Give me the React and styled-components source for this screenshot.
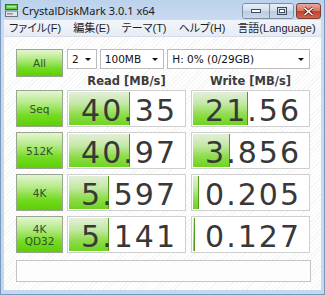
import styled, { createGlobalStyle } from 'styled-components'

const GlobalStyle = createGlobalStyle`
  html, body {
    margin: 0;
    padding: 0;
    background: #c6d8ee;
  }
  * {
    box-sizing: border-box;
  }
`

const Window = styled.div`
  width: 325px;
  height: 295px;
  display: flex;
  flex-direction: column;
  padding: 0 3px 4px 3px;
  background: linear-gradient(to bottom, #bcd2ec 0%, #c9dbf0 20px, #c3d7ee 100%);
  border: 1px solid #7a98bc;
  border-top: none;
`

const TitleBar = styled.div`
  height: 20px;
  flex: none;
  display: flex;
  align-items: center;
  padding-left: 1px;
  gap: 4px;
`

const Title = styled.span`
  font-family: 'Noto Sans', 'DejaVu Sans', sans-serif;
  font-size: 11px;
  color: #1a1a1a;
  flex: 1;
  white-space: nowrap;
`

const Controls = styled.div`
  display: flex;
  align-self: flex-start;
  margin-top: 3px;
  gap: 2px;
`

const CapGroup = styled.div`
  display: flex;
  border: 1px solid #7d8ea5;
  border-radius: 3px;
  overflow: hidden;
`

const CapButton = styled.div`
  width: ${({ $w }) => $w}px;
  height: 14px;
  display: flex;
  align-items: center;
  justify-content: center;
  background: linear-gradient(to bottom, #e6eef8 0%, #d2deec 50%, #bccde2 51%, #c9d8ea 100%);
  & + & {
    border-left: 1px solid #7d8ea5;
  }
`

const CloseButton = styled.div`
  width: 25px;
  height: 16px;
  display: flex;
  align-items: center;
  justify-content: center;
  border: 1px solid #7b3a32;
  border-radius: 3px;
  background: linear-gradient(to bottom, #e7a89b 0%, #d8735f 50%, #c2402a 51%, #d3664d 100%);
`

const MenuBar = styled.div`
  height: 17px;
  flex: none;
  display: flex;
  align-items: center;
  gap: 12px;
  padding-left: 5px;
  background: linear-gradient(to bottom, #f2f5fa 0%, #e6ecf5 100%);
  border-bottom: 1px solid #d6dde8;
  overflow: hidden;
`

const MenuItem = styled.span`
  font-family: 'Liberation Sans', 'Noto Sans CJK JP', sans-serif;
  font-feature-settings: 'palt';
  font-size: 11px;
  line-height: 1;
  white-space: nowrap;
  flex: none;
  color: #1e1e1e;
`

const Client = styled.div`
  flex: 1;
  padding: 12px 0 0 12px;
  background: repeating-linear-gradient(135deg, #ffffff 0px, #ffffff 2px, #f5f5f5 2px, #f5f5f5 3px);
  display: flex;
  flex-direction: column;
`

const Grid = styled.div`
  display: grid;
  grid-template-columns: 47px 120px 119px;
  column-gap: 4px;
`

const TopGrid = styled(Grid)`
  grid-template-rows: 20px 21px;
`

const Rows = styled.div`
  display: flex;
  flex-direction: column;
  gap: 5px;
`

const TestButton = styled.div`
  height: ${({ $h }) => $h || 37}px;
  border: 1px solid #9aa58f;
  background: linear-gradient(to bottom, #e3f6d2 0%, #b4ea86 35%, #74db22 70%, #5ccf05 100%);
  display: flex;
  flex-direction: column;
  align-items: center;
  justify-content: center;
  font-family: 'DejaVu Sans', sans-serif;
  font-size: 10.5px;
  line-height: 12px;
  color: #31502a;
  grid-row: ${({ $span }) => ($span ? 'span 2' : 'auto')};
  align-self: start;
`

const Selects = styled.div`
  grid-column: span 2;
  display: flex;
  gap: 3px;
`

const Select = styled.div`
  width: ${({ $w }) => $w}px;
  height: 20px;
  border: 1px solid #bcbcbc;
  background: #fff;
  display: flex;
  align-items: center;
  justify-content: space-between;
  padding: 0 5px 0 4px;
  font-family: 'DejaVu Sans', sans-serif;
  font-size: 10.5px;
  color: #111;

  &::after {
    content: '';
    border-left: 3px solid transparent;
    border-right: 3px solid transparent;
    border-top: 3px solid #111;
  }
`

const Header = styled.div`
  width: 119px;
  display: flex;
  align-items: center;
  justify-content: center;
  font-family: 'DejaVu Sans', sans-serif;
  font-weight: bold;
  font-size: 11.5px;
  color: #3c3c3c;
  padding-top: 2px;
`

const Row = styled(Grid)`
  height: 37px;
`

const Value = styled.div`
  position: relative;
  width: 119px;
  height: 37px;
  border: 1px solid #cfcfcf;
  background: #fff;
  display: flex;
  align-items: center;
  justify-content: flex-end;
  padding: 3px 8px 0 0;
  font-family: 'DejaVu Sans', sans-serif;
  font-size: 30px;
  letter-spacing: 2px;
  color: #383838;
`

const Bar = styled.div`
  position: absolute;
  top: 1px;
  left: 1px;
  bottom: 1px;
  width: ${({ $w }) => $w}px;
  background: linear-gradient(to bottom, #e2efd8 0%, #c4e8a6 35%, #8cdc47 70%, #6ed420 100%);
  border-right: 1px solid #4f9a1a;
`

const Digits = styled.span`
  position: relative;
`

const Comment = styled.div`
  margin-top: 7px;
  width: 295px;
  height: 22px;
  border: 1px solid #c4c4c4;
  background: #fdfdfd;
`

const AppIcon = () => (
  <svg width="13" height="13" viewBox="0 0 13 13">
    <rect x="0.5" y="0.5" width="12" height="5" fill="#4fcf3a" stroke="#2d7a25" />
    <rect x="2" y="2" width="9" height="1.5" fill="#a9f09a" />
    <rect x="0.5" y="7" width="12" height="5.5" fill="#e4e6e8" stroke="#6c7279" />
    <rect x="2" y="9" width="6" height="1.5" fill="#8d949c" />
  </svg>
)

const results = [
  { label: ['Seq'], read: '40.35', readBar: 61, write: '21.56', writeBar: 55 },
  { label: ['512K'], read: '40.97', readBar: 61, write: '3.856', writeBar: 37 },
  { label: ['4K'], read: '5.597', readBar: 40, write: '0.205', writeBar: 6 },
  { label: ['4K', 'QD32'], read: '5.141', readBar: 40, write: '0.127', writeBar: 2 },
]

const App = () => {
  return (
    <Window>
      <GlobalStyle />
      <TitleBar>
        <AppIcon />
        <Title>CrystalDiskMark 3.0.1 x64</Title>
        <Controls>
          <CapGroup>
            <CapButton $w={26}>
              <svg width="10" height="4"><rect x="0.5" y="0.5" width="9" height="3" fill="#fff" stroke="#3f4d60" /></svg>
            </CapButton>
            <CapButton $w={24}>
              <svg width="10" height="8"><rect x="0.5" y="0.5" width="9" height="7" fill="none" stroke="#3f4d60" /><rect x="2.5" y="2.5" width="5" height="3" fill="#fff" stroke="#3f4d60" /></svg>
            </CapButton>
          </CapGroup>
          <CloseButton>
            <svg width="11" height="9" viewBox="0 0 11 9">
              <path d="M1.5 1 L9.5 8 M9.5 1 L1.5 8" stroke="#5a1a10" strokeWidth="3" />
              <path d="M1.5 1 L9.5 8 M9.5 1 L1.5 8" stroke="#fff" strokeWidth="1.6" />
            </svg>
          </CloseButton>
        </Controls>
      </TitleBar>
      <MenuBar>
        <MenuItem>ファイル(F)</MenuItem>
        <MenuItem>編集(E)</MenuItem>
        <MenuItem>テーマ(T)</MenuItem>
        <MenuItem>ヘルプ(H)</MenuItem>
        <MenuItem>言語(Language)</MenuItem>
      </MenuBar>
      <Client>
        <TopGrid>
          <TestButton $span $h={28}>All</TestButton>
          <Selects>
            <Select $w={30}>2</Select>
            <Select $w={65}>100MB</Select>
            <Select $w={144}>H: 0% (0/29GB)</Select>
          </Selects>
          <Header>Read [MB/s]</Header>
          <Header>Write [MB/s]</Header>
        </TopGrid>
        <Rows>
          {results.map((r) => (
            <Row key={r.label.join()}>
              <TestButton>
                {r.label.map((l) => (
                  <span key={l}>{l}</span>
                ))}
              </TestButton>
              <Value>
                <Bar $w={r.readBar} />
                <Digits>{r.read}</Digits>
              </Value>
              <Value>
                <Bar $w={r.writeBar} />
                <Digits>{r.write}</Digits>
              </Value>
            </Row>
          ))}
        </Rows>
        <Comment />
      </Client>
    </Window>
  )
}

export default App
